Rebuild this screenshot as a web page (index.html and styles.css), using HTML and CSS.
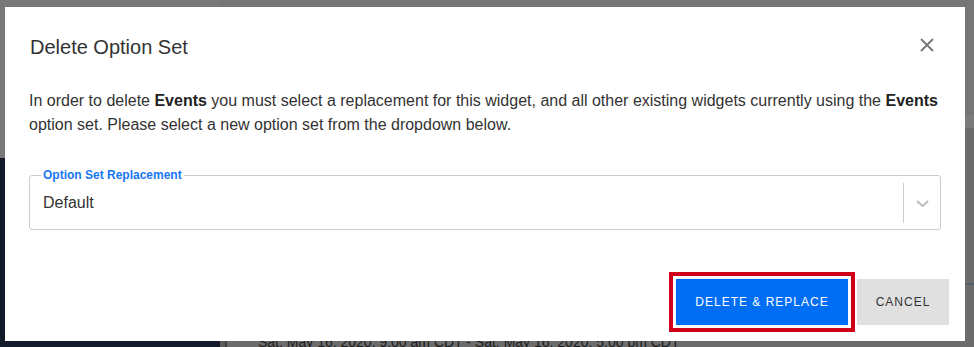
FILE: index.html
```html
<!DOCTYPE html>
<html lang="en">
<head>
<meta charset="utf-8">
<title>Delete Option Set</title>
<link rel="stylesheet" href="styles.css">
</head>
<body>
<div class="page">
  <div class="side">
    <div class="side-top"></div>
    <nav class="side-nav"></nav>
  </div>
  <div class="content">
    <div class="content-head"></div>
    <div class="content-band"></div>
    <div class="content-body">
      <div class="content-gutter"></div>
      <div class="content-main">
        <div class="content-section"></div>
        <p class="date">Sat, May 16, 2020, 9:00 am CDT - Sat, May 16, 2020, 5:00 pm CDT</p>
      </div>
    </div>
  </div>
</div>

<div class="dialog" role="dialog" aria-labelledby="dlg-title">
  <header class="dialog-header">
    <h2 class="dialog-title" id="dlg-title">Delete Option Set</h2>
    <button class="close" aria-label="Close">
      <svg width="14" height="14" viewBox="0 0 14 14"><path d="M1 1 L13 13 M13 1 L1 13" stroke="#757575" stroke-width="1.8" fill="none"/></svg>
    </button>
  </header>
  <p class="dialog-text">In order to delete <b>Events</b> you must select a replacement for this widget, and all other existing widgets currently using the <b>Events</b> option set. Please select a new option set from the dropdown below.</p>
  <fieldset class="field">
    <legend class="field-label">Option Set Replacement</legend>
    <div class="select-row">
      <div class="select-value">Default</div>
      <div class="select-sep"></div>
      <div class="select-arrow">
        <svg width="13" height="7" viewBox="0 0 13 7"><path d="M1 1 L6.5 6 L12 1" stroke="#bdbdbd" stroke-width="2" fill="none"/></svg>
      </div>
    </div>
  </fieldset>
  <div class="actions">
    <button class="btn btn-primary">DELETE &amp; REPLACE</button>
    <button class="btn btn-secondary">CANCEL</button>
  </div>
</div>
</body>
</html>
```
FILE: styles.css
```css
* { box-sizing: border-box; }

html, body {
  margin: 0;
  padding: 0;
}

body {
  width: 974px;
  height: 347px;
  overflow: hidden;
  position: relative;
  font-family: "Liberation Sans", Arial, sans-serif;
  background: #777777;
}

/* ---------- dimmed page behind the dialog ---------- */
.page {
  display: grid;
  grid-template-columns: 220px 1fr;
  height: 347px;
}

.side {
  display: flex;
  flex-direction: column;
}

.side-top {
  height: 158px;
  background: #787878;
}

.side-nav {
  flex: 1;
  background: #131b2a;
}

.content {
  display: flex;
  flex-direction: column;
  background: #6c6c6c;
}

.content-head {
  height: 115px;
  background: #767676;
}

.content-band {
  height: 13px;
  background: #7b7b7b;
}

.content-body {
  flex: 1;
  display: flex;
}

.content-gutter {
  width: 7px;
  background: #5c5c5c;
  border-right: 2px solid #3a3d42;
}

.content-main {
  flex: 1;
  display: flex;
  flex-direction: column;
}

.content-section {
  height: 157px;
  border-bottom: 2px solid #56606b;
}

.date {
  margin: 47px 0 0 31px;
  font-size: 14px;
  line-height: 20px;
  color: #1c1c1c;
  white-space: nowrap;
}

/* ---------- dialog ---------- */
.dialog {
  position: absolute;
  left: 5px;
  top: 7px;
  width: 960px;
  height: 334px;
  background: #ffffff;
  padding: 28px 24px 16px 24px;
  display: flex;
  flex-direction: column;
  color: #333333;
}

.dialog-header {
  display: flex;
  justify-content: space-between;
  align-items: flex-start;
  height: 24px;
}

.dialog-title {
  margin: 0 0 0 1px;
  font-size: 20px;
  line-height: 24px;
  font-weight: normal;
  color: #333333;
}

.close {
  width: 24px;
  height: 24px;
  margin: -2px 2px 0 0;
  padding: 0;
  border: 0;
  background: transparent;
  display: flex;
  align-items: center;
  justify-content: center;
}

.dialog-text {
  margin: 30px 0 0 0;
  font-size: 16px;
  line-height: 24px;
  color: #333333;
}

.dialog-text b {
  color: #222222;
}

.field {
  margin: 31px 0 0 0;
  padding: 0;
  border: 1px solid #cccccc;
  border-radius: 3px;
  min-width: 0;
}

.field-label {
  margin-left: 11px;
  padding: 0 2px;
  font-size: 12px;
  line-height: 14px;
  font-weight: bold;
  color: #1877f2;
}

.select-row {
  display: flex;
  align-items: center;
  height: 40px;
  margin: 1px 0 6px 0;
}

.select-value {
  flex: 1;
  padding-left: 13px;
  font-size: 16px;
  line-height: 20px;
  color: #333333;
}

.select-sep {
  width: 1px;
  height: 40px;
  background: #cccccc;
}

.select-arrow {
  width: 36px;
  display: flex;
  justify-content: center;
  align-items: center;
}

.select-arrow svg { display: block; }

.actions {
  margin: 49px -8px 0 0;
  display: flex;
  justify-content: flex-end;
  gap: 9px;
}

.btn {
  height: 46px;
  padding: 0;
  border: 0;
  border-radius: 0;
  font-family: "Liberation Sans", Arial, sans-serif;
  font-size: 12px;
  letter-spacing: 1px;
  white-space: nowrap;
}

.btn-primary {
  background: #006ef4;
  color: #ffffff;
  outline: 4px solid #d0021b;
  outline-offset: 3px;
  width: 172px;
}

.btn-secondary {
  background: #e0e0e0;
  color: #333333;
  width: 92px;
}
```
